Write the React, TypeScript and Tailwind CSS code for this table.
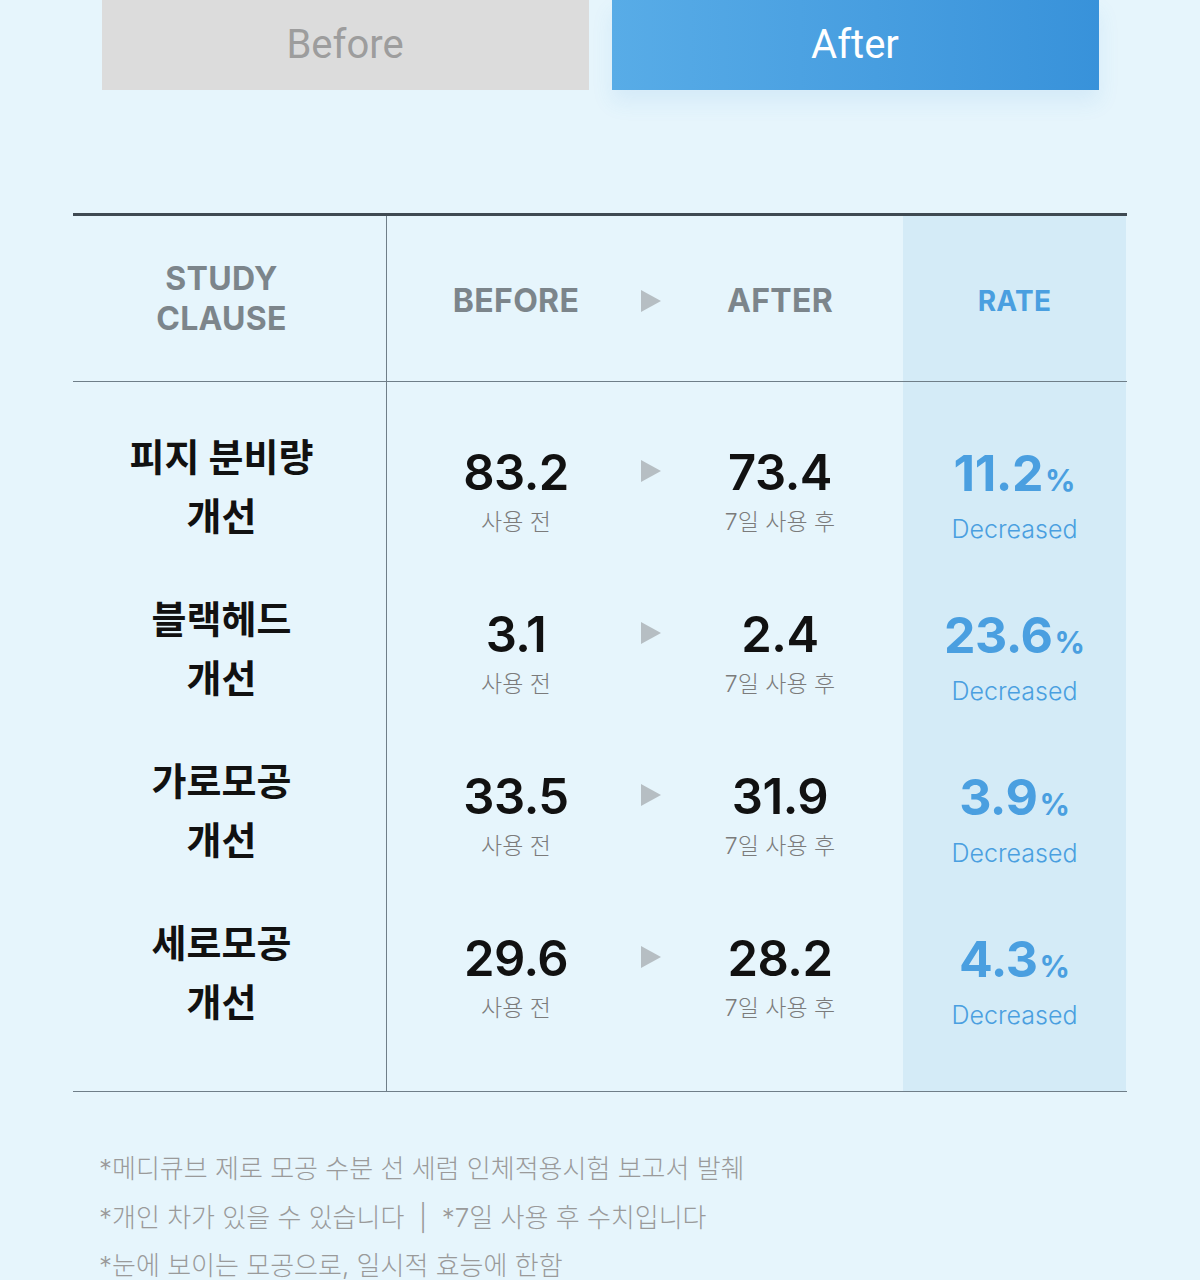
const KR = "font-['Inter','Noto_Sans_CJK_KR',sans-serif]";

const ROWS = [
  { label: ["피지 분비량", "개선"], before: "83.2", after: "73.4", rate: "11.2" },
  { label: ["블랙헤드", "개선"], before: "3.1", after: "2.4", rate: "23.6" },
  { label: ["가로모공", "개선"], before: "33.5", after: "31.9", rate: "3.9" },
  { label: ["세로모공", "개선"], before: "29.6", after: "28.2", rate: "4.3" },
];

const COLS = "grid grid-cols-[314px_258px_12px_246px_223px]";

function Arrow({ className = "" }: { className?: string }) {
  return (
    <div className={`flex justify-center ${className}`}>
      <svg width="20" height="22" viewBox="0 0 20 22" className="shrink-0">
        <polygon points="0,0 20,11 0,22" fill="#b6bec3" />
      </svg>
    </div>
  );
}

function Row({ row }: { row: (typeof ROWS)[number] }) {
  return (
    <div className={`${COLS} h-[162px]`}>
      <div className="flex flex-col items-center justify-center border-r border-[#6f7e88] pr-[16px] text-[38px] leading-[59px] font-bold text-[#111]">
        {row.label.map((l) => (
          <div key={l}>{l}</div>
        ))}
      </div>
      <div className="flex flex-col items-center pt-[39px]">
        <div className="text-[49px] leading-[56px] font-semibold tracking-[-0.5px] text-[#111]">{row.before}</div>
        <div className="mt-[6px] text-[23px] leading-[30px] font-light text-[#7b7b7b]">사용 전</div>
      </div>
      <Arrow className="items-start pt-[54px]" />
      <div className="flex flex-col items-center pt-[39px]">
        <div className="text-[49px] leading-[56px] font-semibold tracking-[-0.5px] text-[#111]">{row.after}</div>
        <div className="mt-[6px] text-[23px] leading-[30px] font-light text-[#7b7b7b]">7일 사용 후</div>
      </div>
      <div className="flex flex-col items-center bg-[#d4ebf7] pt-[39px]">
        <div className="flex items-baseline text-[#4a9fe0]">
          <span className="text-[50px] leading-[56px] font-bold tracking-[-0.5px]">{row.rate}</span>
          <span className="ml-[2px] text-[30px] font-bold">%</span>
        </div>
        <div className="mt-[9px] text-[25px] leading-[34px] font-light text-[#4a9fe0]">Decreased</div>
      </div>
    </div>
  );
}

export default function App() {
  return (
    <div className={`${KR} min-h-[1280px] w-[1200px] bg-[#e6f5fc]`}>
      <div className="flex justify-center gap-[23px]">
        <div className="flex h-[90px] w-[487px] items-center justify-center bg-[#dcdcdc] font-['Roboto',sans-serif] text-[40px] text-[#9d9d9d]">
          Before
        </div>
        <div className="flex h-[90px] w-[487px] items-center justify-center bg-gradient-to-r from-[#58ace7] to-[#3892da] font-['Roboto',sans-serif] text-[40px] text-white shadow-[0_12px_20px_rgba(58,148,220,0.10)]">
          After
        </div>
      </div>

      <div className="mx-[73px] mt-[123px] border-t-[3px] border-[#3f4a52]">
        <div className={`${COLS} h-[166px] border-b border-[#6f7e88] text-[32px] font-bold tracking-[0.3px] text-[#7c858b]`}>
          <div className="flex flex-col items-center justify-center border-r border-[#6f7e88] pr-[16px] leading-[40px]">
            <div>STUDY</div>
            <div>CLAUSE</div>
          </div>
          <div className="flex items-center justify-center pt-[4px]">BEFORE</div>
          <Arrow className="items-center pt-[4px]" />
          <div className="flex items-center justify-center pt-[4px]">AFTER</div>
          <div className="flex items-center justify-center bg-[#d4ebf7] pt-[4px] text-[28px] text-[#4a9fe0]">RATE</div>
        </div>

        <div className={`${COLS} h-[24px]`}>
          <div className="border-r border-[#6f7e88]" />
          <div />
          <div />
          <div />
          <div className="bg-[#d4ebf7]" />
        </div>
        {ROWS.map((r) => (
          <Row key={r.before} row={r} />
        ))}
        <div className={`${COLS} h-[38px] border-b border-[#6f7e88]`}>
          <div className="border-r border-[#6f7e88]" />
          <div />
          <div />
          <div />
          <div className="bg-[#d4ebf7]" />
        </div>
      </div>

      <div className="mt-[53px] pl-[99px] text-[26px] leading-[48.5px] font-light text-[#9a9a9a]">
        <div>*메디큐브 제로 모공 수분 선 세럼 인체적용시험 보고서 발췌</div>
        <div>*개인 차가 있을 수 있습니다 &nbsp;|&nbsp; *7일 사용 후 수치입니다</div>
        <div>*눈에 보이는 모공으로, 일시적 효능에 한함</div>
      </div>
    </div>
  );
}
